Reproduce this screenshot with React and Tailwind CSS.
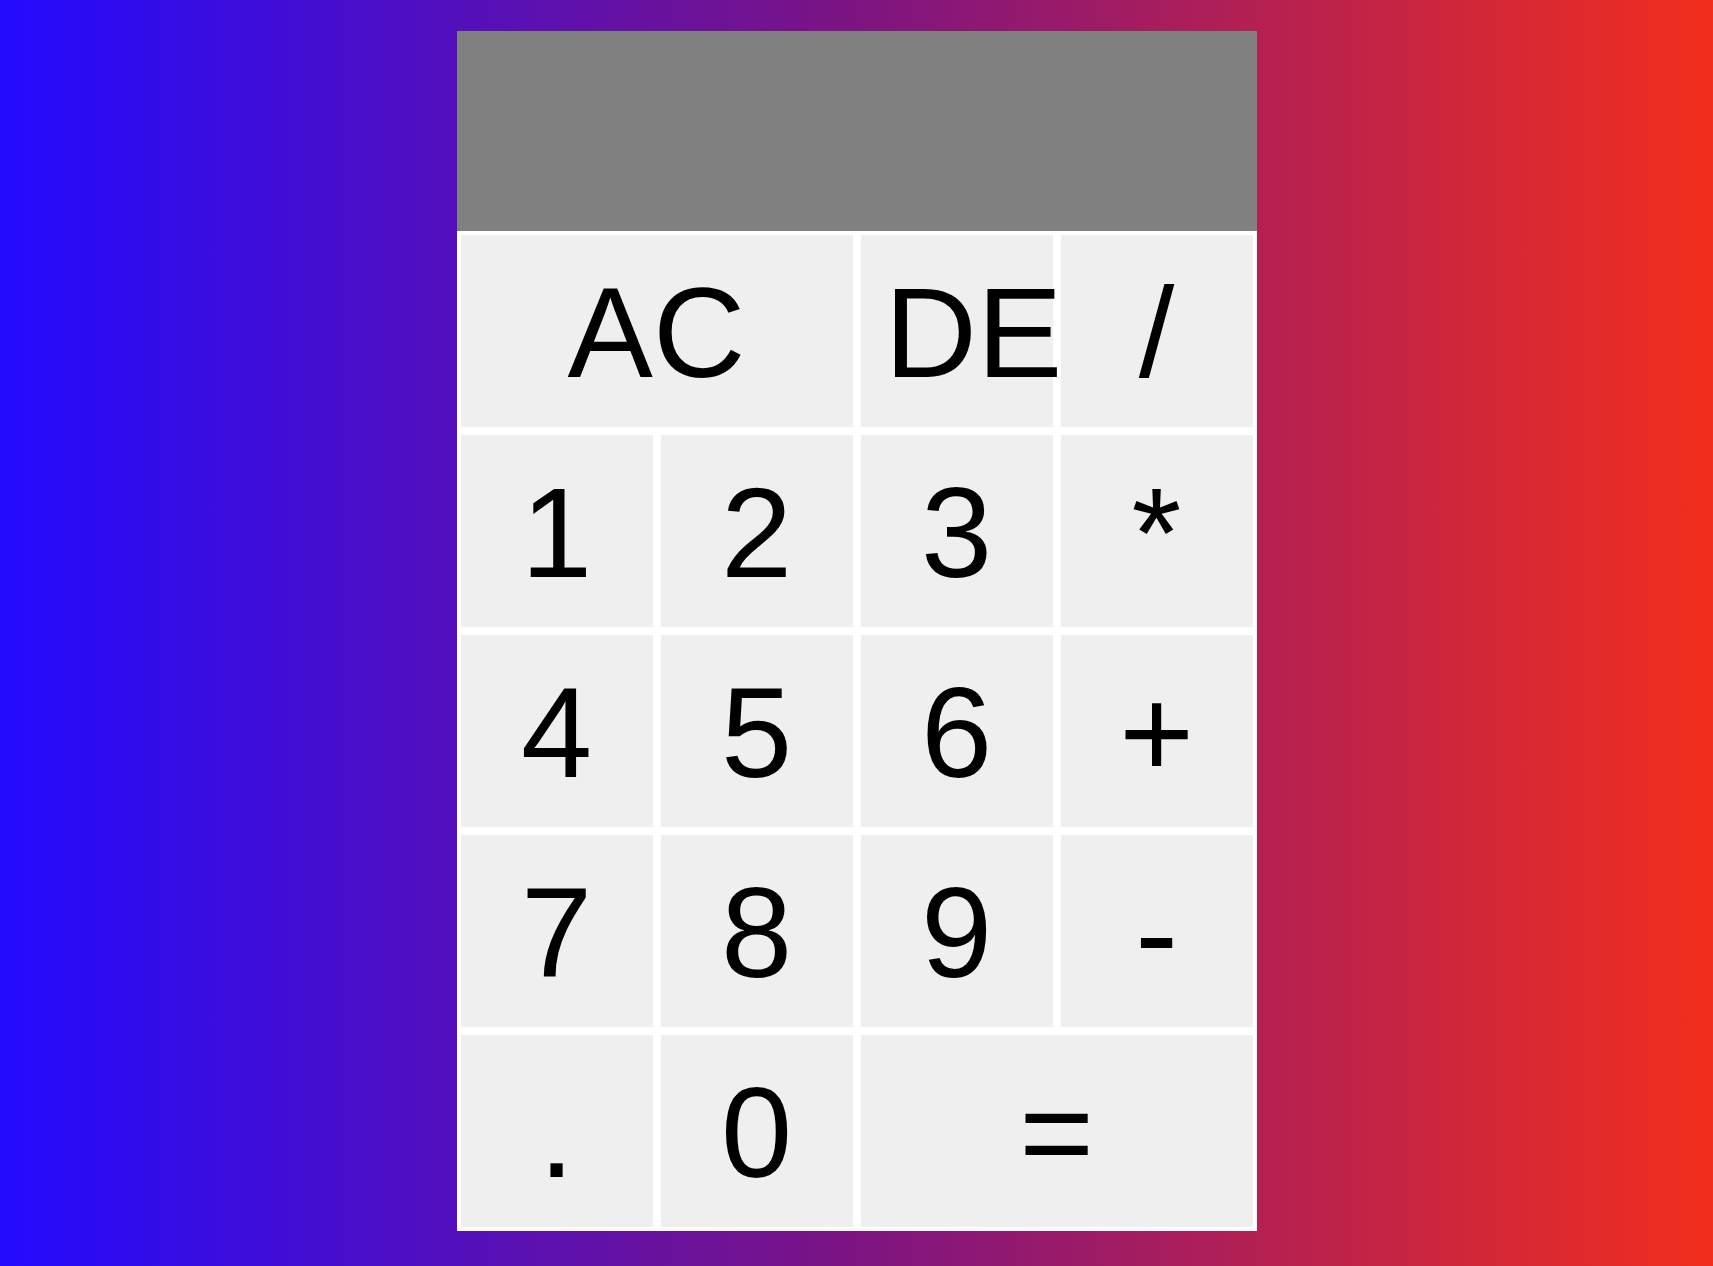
import React, { useState } from "react";

const keys = [
  { label: "AC", span: true },
  { label: "DE" },
  { label: "/" },
  { label: "1" },
  { label: "2" },
  { label: "3" },
  { label: "*" },
  { label: "4" },
  { label: "5" },
  { label: "6" },
  { label: "+" },
  { label: "7" },
  { label: "8" },
  { label: "9" },
  { label: "-" },
  { label: "." },
  { label: "0" },
  { label: "=", span: true },
];

export default function App() {
  const [value, setValue] = useState("");

  const press = (k) => {
    if (k === "AC") return setValue("");
    if (k === "DE") return setValue((v) => v.slice(0, -1));
    if (k === "=") {
      try {
        // eslint-disable-next-line no-new-func
        setValue(String(Function(`return (${value})`)()));
      } catch {
        setValue("Error");
      }
      return;
    }
    setValue((v) => v + k);
  };

  return (
    <div className="min-h-screen w-full bg-[linear-gradient(to_right,#230aff_0%,#7d1482_50%,#f22e1d_100%)] pt-[31px] font-['Liberation_Sans',Arial,sans-serif]">
      <div className="mx-auto w-[800px] bg-white">
        <div className="h-[200px] bg-[#808080] px-6 text-right text-[128px] leading-[200px] text-white overflow-hidden">
          {value}
        </div>
        <div className="grid grid-cols-[repeat(4,200px)] auto-rows-[200px]">
          {keys.map((k) => (
            <button
              key={k.label}
              type="button"
              onClick={() => press(k.label)}
              className={`m-1 bg-[#efefef] px-6 pt-[2px] text-center text-[128px] text-black cursor-pointer ${
                k.span ? "col-span-2" : ""
              }`}
            >
              {k.label}
            </button>
          ))}
        </div>
      </div>
    </div>
  );
}
